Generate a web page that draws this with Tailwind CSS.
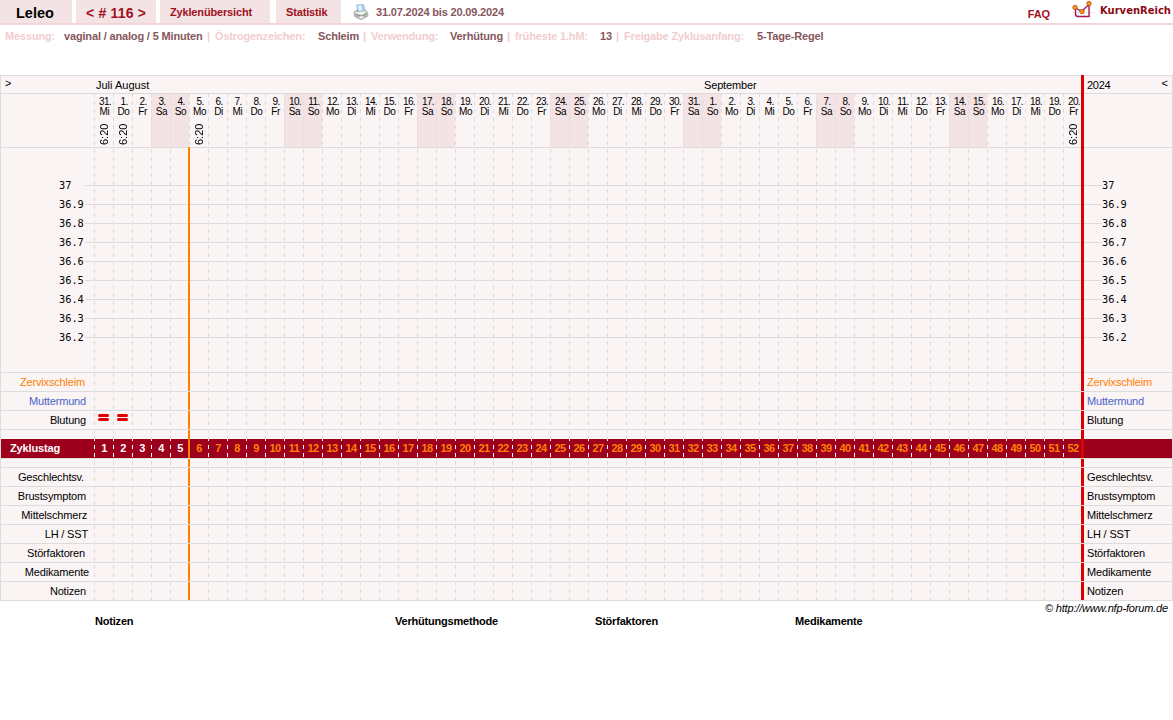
<!DOCTYPE html>
<html lang="de">
<head>
<meta charset="utf-8">
<title>KurvenReich</title>
<script src="https://cdn.jsdelivr.net/npm/@tailwindcss/browser@4"></script>
</head>
<body class="w-[1173px] h-[720px] overflow-hidden bg-white text-black text-[11px] leading-[13px] font-['Liberation_Sans',Arial,sans-serif]">
<header class="flex h-[25px] border-b-2 border-[#f4d5d7] font-bold text-[#a01020] whitespace-nowrap">
  <div class="w-[72px] bg-[#f4e3e5] pl-4 pt-[5px] text-[14.5px] leading-4 text-black">Leleo</div>
  <div class="ml-1 w-20 bg-[#f4e3e5] pl-[10px] pt-[5px] text-[14px] leading-4 tracking-[0.2px]">&lt; # 116 &gt;</div>
  <div class="ml-1 w-[110px] bg-[#f4e3e5] pl-[10px] pt-[6px] tracking-[-0.16px]">Zyklenübersicht</div>
  <div class="ml-[6px] w-[65px] bg-[#f4e3e5] pl-[10px] pt-[6px] tracking-[-0.15px]">Statistik</div>
  <svg class="ml-3 mt-1 size-4" viewBox="0 0 16 16">
    <path d="M3.500 1L10.500 .5L12.500 7L5 8z" fill="#a9d2fa" stroke="#9ab0cc" stroke-width=".7"/>
    <path d="M5 1.700L8 1.500L9 6L6 7z" fill="#e7f5ff"/>
    <path d="M1 8L4 6L5 8L12 6.500L14.500 8L15 12L8 15.500L1.500 12.500z" fill="#c8c8c8" stroke="#999" stroke-width=".7"/>
    <path d="M1.500 8.500L5 8L12 7L14.500 8.500L8 11z" fill="#eee"/>
    <path d="M2 10.500L8 12L14 10" fill="none" stroke="#888"/>
    <path d="M4 13L9 11.500L12.500 12.500L8 15.500z" fill="#eef2e8" stroke="#888" stroke-width=".6"/>
    <path d="M12 9h1.500" stroke="#6bad50"/>
  </svg>
  <div class="ml-[7px] pt-[6px] text-[#85575c] tracking-[-0.17px]">31.07.2024 bis 20.09.2024</div>
  <div class="ml-auto pt-[8px] tracking-[-0.1px]">FAQ</div>
  <svg class="ml-[20px] w-[26px] h-[20px]" viewBox="0 0 26 20">
    <path d="M1 12.500H25M8.500 5V19M14.500 5V19M20.500 5V19" stroke="#ececec" fill="none"/>
    <path d="M5.500 8L11.500 11.500L19.500 4M5.500 8V14Q5.500 16.500 8 16.500H19V4" fill="none" stroke="#a8184e" stroke-width="1.400"/>
    <g fill="#f39a10" stroke="#b04a20" stroke-width=".8"><circle cx="5" cy="7.500" r="2.200"/><circle cx="12" cy="11.500" r="2.200"/><circle cx="19" cy="3.500" r="2.200"/></g>
  </svg>
  <div class="ml-1 mr-[2px] pt-1 text-[10px] text-[#8b0a14] font-['DejaVu_Sans',Verdana,sans-serif]">KurvenReich</div>
</header>
<div class="flex h-[50px] pt-[5px] font-bold tracking-[-0.16px] text-[#f2cdcf] whitespace-nowrap">
  <span class="w-[59px] pl-[5px]">Messung:</span><span class="w-[143px] pl-[5px] text-[#85575c]">vaginal / analog / 5 Minuten</span>
  <span class="w-[13px] pl-[5px]">|</span><span class="w-[103px]">Östrogenzeichen:</span><span class="w-[45px] text-[#85575c]">Schleim</span>
  <span class="w-[8px]">|</span><span class="w-[79px]">Verwendung:</span><span class="w-[57px] text-[#85575c]">Verhütung</span>
  <span class="w-[8px]">|</span><span class="w-[85px]">früheste 1.hM:</span><span class="w-[16px] text-[#85575c]">13</span>
  <span class="w-[8px]">|</span><span class="w-[133px]">Freigabe Zyklusanfang:</span><span class="text-[#85575c]">5-Tage-Regel</span>
</div>

<main id="chart" class="relative w-[1173px] h-[526px] border border-[#dcdcdc] bg-[#faf4f4] whitespace-nowrap">
  <div class="flex h-[18px] border-b border-[#dcdcdc] pt-[3px]">
    <span class="w-[95px] pl-1 -mt-[2px]">&gt;</span><span class="w-[19px]">Juli</span><span class="w-[589px]">August</span><span class="w-[383px] tracking-[-0.15px]">September</span><span class="tracking-[-0.3px]">2024</span><span class="ml-auto mr-1 -mt-[2px]">&lt;</span>
  </div>
  <div id="days" class="flex h-[54px] border-b border-[#dcdcdc] pl-[93px] text-[10px] leading-[10px] text-center"></div>
  <div id="temps" class="h-[225px] border-b border-[#dcdcdc] pt-[28px] font-['DejaVu_Sans_Mono',monospace] text-[10.300px]"></div>
  <div id="upper" class="relative z-30 tracking-[-0.17px]"></div>
  <div class="h-[9px]"></div>
  <div id="cycle" class="relative z-10 flex h-[19px] bg-[#9c001c] pt-[3px] font-bold text-center"></div>
  <div class="relative z-30 h-[10px] border-y border-[#dcdcdc]"></div>
  <div id="lower" class="relative z-30 tracking-[-0.17px]"></div>
  <div class="absolute left-[93px] top-[18px] w-[970px] h-[506px] bg-[repeating-linear-gradient(to_bottom,#dcdcdc_0_3px,transparent_3px_7px,#dcdcdc_7px_8px)] mask-[repeating-linear-gradient(to_right,#000_0_1px,transparent_1px_19px)]"></div>
  <div class="absolute z-20 left-[187px] top-[71px] w-[2px] h-[453px] bg-[#ff8000]"></div>
  <div class="absolute z-20 left-[1080px] top-[-1px] w-[3px] h-[525px] bg-[#dc0000]"></div>
</main>
<div class="flex h-[15px] justify-end pr-[5px] pt-[1px] italic tracking-[-0.17px]">© http://www.nfp-forum.de</div>
<footer class="flex pl-[95px] -mt-[1px] font-bold tracking-[-0.2px]">
  <span class="w-[300px]">Notizen</span><span class="w-[200px]">Verhütungsmethode</span><span class="w-[200px]">Störfaktoren</span><span>Medikamente</span>
</footer>
<script>
const names = ['Mo','Di','Mi','Do','Fr','Sa','So'];
const days = document.getElementById('days');
const cycle = document.getElementById('cycle');
let cells = '', nums = '<div class="w-[93px] pl-[9px] text-left text-white tracking-[-0.15px]">Zyklustag</div>';
for (let i = 0; i < 52; i++) {
  const date = i === 0 ? 31 : i < 32 ? i : i - 31;
  const w = (i + 2) % 7;
  const time = [0, 1, 5, 51].includes(i) ? '<div class="flex justify-center pl-[2px] pt-[6px]"><div class="h-[22px] w-[11px] rotate-180 text-[11px] leading-[11px] [writing-mode:vertical-rl]">6:20</div></div>' : '';
  const shade = w > 4 ? 'bg-[#f4e3e5]' : '';
  cells += `<div class="w-[19px] pt-[3px] ${shade}"><div class="tracking-[-0.6px] pl-[3px]">${date}.</div><div class="tracking-[-0.4px] pl-[2px]">${names[w]}</div>${time}</div>`;
  nums += `<div class="w-[19px] pl-[1px] tracking-[-0.5px] ${i < 5 ? 'text-white' : 'text-[#ff8000]'}">${i + 1}</div>`;
}
days.innerHTML = cells;
cycle.innerHTML = nums + '<div class="absolute left-[93px] top-0 w-[970px] h-[19px] bg-[repeating-linear-gradient(to_bottom,#fff_0_2px,transparent_2px_6px,#fff_6px_8px)] mask-[repeating-linear-gradient(to_right,#000_0_1px,transparent_1px_19px)]"></div>';
document.getElementById('temps').innerHTML = ['37','36.9','36.8','36.7','36.6','36.5','36.4','36.3','36.2'].map(t =>
  `<div class="flex h-[19px] items-center leading-[19px]"><span class="w-[84px] pl-[58px]">${t}</span><span class="h-px w-[1017px] bg-[#dcdcdc]"></span><span>${t}</span></div>`).join('');
const blood = '<span class="flex w-[19px] flex-col items-center gap-[1px] pr-px"><i class="h-[3px] w-[11px] rounded-full bg-[#dc0000]"></i><i class="h-[3px] w-[11px] rounded-full bg-[#dc0000]"></i></span>';
const row = ([label, pad, color, mark]) => `<div class="flex h-[19px] border-b border-[#dcdcdc] pt-[3px] ${color || ''}"><span class="w-[93px] text-right ${pad}">${label}</span><span class="flex w-[993px]">${mark || ''}</span><span>${label}</span></div>`;
document.getElementById('upper').innerHTML = [['Zervixschleim','pr-[9px]','text-[#ff8000]'],['Muttermund','pr-[8px]','text-[#4a63cc]'],['Blutung','pr-[8px]','',blood + blood]].map(row).join('');
document.getElementById('lower').innerHTML = [['Geschlechtsv.','pr-[10px]'],['Brustsymptom','pr-[8px]'],['Mittelschmerz','pr-[7px]'],['LH / SST','pr-[6px]'],['Störfaktoren','pr-[9px]'],['Medikamente','pr-[5px]'],['Notizen','pr-[8px]']].map(row).join('');
</script>
</body>
</html>
